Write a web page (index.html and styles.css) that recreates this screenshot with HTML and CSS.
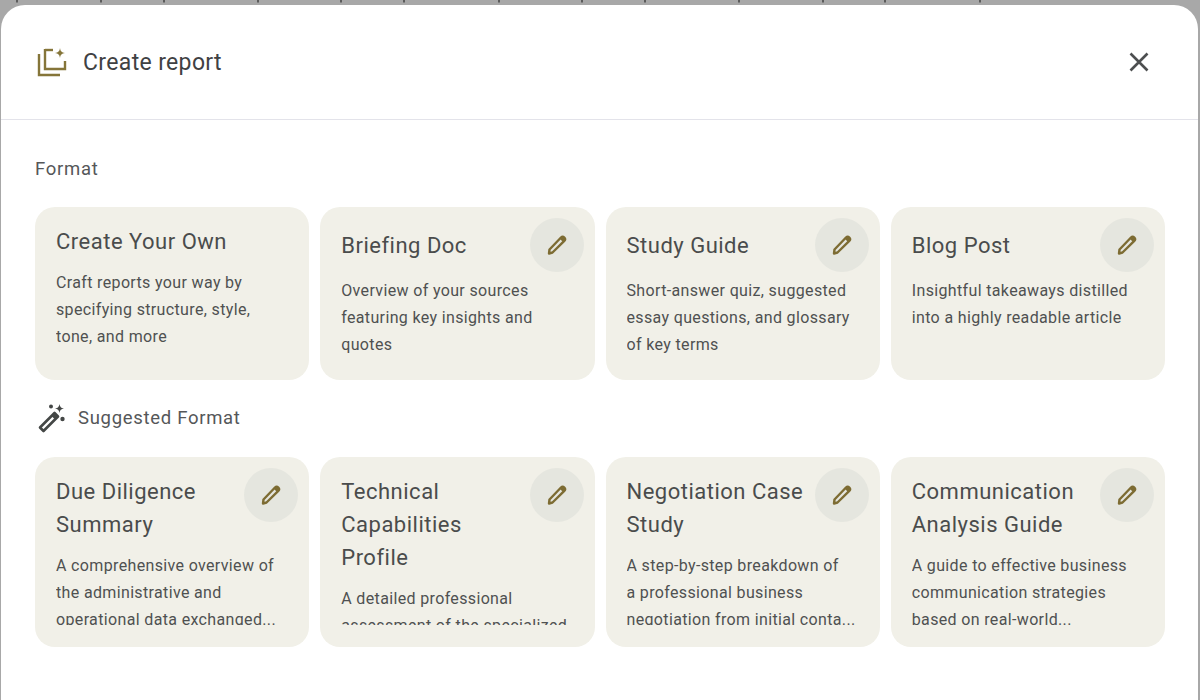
FILE: index.html
```html
<!DOCTYPE html>
<html lang="en">

<head>
    <meta charset="UTF-8">
    <title>Create report</title>
    <link rel="stylesheet" href="styles.css">
</head>

<body>
    <svg class="backdrop-marks" viewBox="0 0 1200 5" fill="#5c5c5c" aria-hidden="true">
        <rect x="16" width="2" height="2.500"/><rect x="100" width="2" height="2.500"/><rect x="163" width="2" height="2.500"/>
        <rect x="257" width="2" height="2.500"/><rect x="340" width="2" height="2.500"/><rect x="403" width="2" height="2.500"/>
        <rect x="498" width="2" height="2.500"/><rect x="581" width="2" height="2.500"/><rect x="644" width="2" height="2.500"/>
        <rect x="738" width="2" height="2.500"/><rect x="822" width="2" height="2.500"/><rect x="884" width="2" height="2.500"/>
        <rect x="979" width="2" height="2.500"/>
    </svg>
    <div class="modal">
        <header class="modal-header">
            <svg class="header-icon" viewBox="0 0 30 30" fill="none" stroke="#857539" stroke-width="2.400">
                <path d="M2 7v21h21"/>
                <path d="M8 2v20h20V14"/>
                <path d="M8 3h8"/>
                <path d="M23 1c.6 3.400 1.600 4.400 5 5-3.400.6-4.400 1.600-5 5-.6-3.400-1.600-4.400-5-5 3.400-.6 4.400-1.600 5-5z" fill="#857539" stroke="none"/>
            </svg>
            <h1>Create report</h1>
            <button class="close-btn" type="button" aria-label="Close">
                <svg viewBox="0 0 20 20" stroke="#4d4f50" stroke-width="2.600" fill="none">
                    <path d="M1.500 1.500l17 17M18.500 1.500l-17 17"/>
                </svg>
            </button>
        </header>

        <main class="modal-body">
            <h2 class="section-label">Format</h2>
            <div class="card-row">
                <div class="card">
                    <div class="card-head"><h3>Create Your Own</h3></div>
                    <p>Craft reports your way by specifying structure, style, tone, and more</p>
                </div>
                <div class="card editable">
                    <div class="card-head"><h3>Briefing Doc</h3></div>
                    <p>Overview of your sources featuring key insights and quotes</p>
                    <button class="edit-btn" type="button" aria-label="Edit"><svg viewBox="0 0 24 24"><use href="#pencil"/></svg></button>
                </div>
                <div class="card editable">
                    <div class="card-head"><h3>Study Guide</h3></div>
                    <p>Short-answer quiz, suggested essay questions, and glossary of key terms</p>
                    <button class="edit-btn" type="button" aria-label="Edit"><svg viewBox="0 0 24 24"><use href="#pencil"/></svg></button>
                </div>
                <div class="card editable">
                    <div class="card-head"><h3>Blog Post</h3></div>
                    <p>Insightful takeaways distilled into a highly readable article</p>
                    <button class="edit-btn" type="button" aria-label="Edit"><svg viewBox="0 0 24 24"><use href="#pencil"/></svg></button>
                </div>
            </div>

            <div class="suggested-label">
                <svg class="wand-icon" viewBox="0 0 30 30">
                    <path d="M3 24.500L17.500 10l3.500 3.500L6.500 28z" fill="none" stroke="#444746" stroke-width="2.600" stroke-linejoin="round"/>
                    <path d="M14.500 13l3.500 3.500L21 13.500 17.500 10z" fill="#444746"/>
                    <path d="M22.500 1c.6 3 1.500 4 4.500 4.500-3 .6-3.900 1.500-4.500 4.500-.6-3-1.500-3.900-4.500-4.500 3-.5 3.900-1.500 4.500-4.500z" fill="#444746"/>
                    <circle cx="14" cy="3.500" r="2" fill="#444746"/>
                    <circle cx="25.500" cy="16" r="2.200" fill="#444746"/>
                </svg>
                <h2 class="section-label">Suggested Format</h2>
            </div>
            <div class="card-row tall">
                <div class="card editable">
                    <div class="card-head"><h3>Due Diligence Summary</h3></div>
                    <p>A comprehensive overview of the administrative and operational data exchanged...</p>
                    <button class="edit-btn" type="button" aria-label="Edit"><svg viewBox="0 0 24 24"><use href="#pencil"/></svg></button>
                </div>
                <div class="card editable">
                    <div class="card-head"><h3>Technical Capabilities Profile</h3></div>
                    <p>A detailed professional assessment of the specialized</p>
                    <button class="edit-btn" type="button" aria-label="Edit"><svg viewBox="0 0 24 24"><use href="#pencil"/></svg></button>
                </div>
                <div class="card editable">
                    <div class="card-head"><h3>Negotiation Case Study</h3></div>
                    <p>A step-by-step breakdown of<br>a professional business<br>negotiation from initial conta...</p>
                    <button class="edit-btn" type="button" aria-label="Edit"><svg viewBox="0 0 24 24"><use href="#pencil"/></svg></button>
                </div>
                <div class="card editable">
                    <div class="card-head"><h3>Communication Analysis Guide</h3></div>
                    <p>A guide to effective business communication strategies based on real-world...</p>
                    <button class="edit-btn" type="button" aria-label="Edit"><svg viewBox="0 0 24 24"><use href="#pencil"/></svg></button>
                </div>
            </div>
        </main>
    </div>

    <svg class="icon-defs" aria-hidden="true">
        <symbol id="pencil" viewBox="0 0 24 24">
            <path d="M4.500 16.500L16 4.500c1-1 2.300-1 3.300 0s1 2.300 0 3.300L7.500 19.500 4 20.500z" fill="none" stroke="#7d6c33" stroke-width="2.400" stroke-linejoin="round"/>
            <path d="M15 6l1-1.500c1-1 2.300-1 3.300 0s1 2.300 0 3.300L18 9z" fill="#7d6c33"/>
        </symbol>
    </svg>
</body>

</html>
```

FILE: styles.css
```css
* {
    box-sizing: border-box;
}

html,
body {
    height: 100%;
}

body {
    margin: 0;
    overflow: hidden;
    background-color: #a8a8a8;
    color: #444746;
    font-family: Roboto, "Noto Sans", sans-serif;
}

.icon-defs {
    display: none;
}

.backdrop-marks {
    display: block;
    width: 1200px;
    height: 5px;
}

.modal {
    height: 720px;
    margin: 0 2px 0 1px;
    background-color: #ffffff;
    border-radius: 24px 24px 0 0;
}

.modal-header {
    display: flex;
    align-items: center;
    height: 115px;
    padding: 0 49px 0 36px;
    border-bottom: 1px solid #e3e3ea;
}

.header-icon {
    width: 30px;
    height: 30px;
    margin-right: 16px;
}

.modal-header h1 {
    flex: 1;
    margin: 0;
    color: #3f4143;
    font-size: 23px;
    font-weight: 400;
    letter-spacing: 0.35px;
}

.close-btn {
    width: 20px;
    height: 20px;
    padding: 0;
    border: none;
    background: none;
}

.close-btn svg {
    display: block;
}

.modal-body {
    padding: 36px 33px 0 34px;
}

.section-label {
    margin: 0;
    color: #555759;
    font-size: 18.500px;
    font-weight: 400;
    line-height: 26px;
    letter-spacing: 0.7px;
}

.card-row {
    display: grid;
    grid-template-columns: repeat(4, 1fr);
    gap: 11px;
    margin-top: 25px;
}

.card-row.tall {
    grid-template-rows: 190px;
    margin-top: 24px;
}

.card {
    position: relative;
    display: flex;
    flex-direction: column;
    padding: 18px 21px 22px;
    border-radius: 20px;
    background-color: #f1f0e8;
}

.card-head {
    display: flex;
    align-items: center;
    flex-shrink: 0;
    margin-bottom: 11px;
}

.editable .card-head {
    min-height: 41px;
    padding-right: 50px;
}

.card h3 {
    margin: 0;
    color: #4a4c4c;
    font-size: 22px;
    font-weight: 400;
    line-height: 33px;
    letter-spacing: 0.5px;
}

.card p {
    display: -webkit-box;
    margin: 0;
    min-height: 0;
    overflow: hidden;
    color: #4f5151;
    font-size: 16px;
    line-height: 27px;
    letter-spacing: 0.35px;
    -webkit-box-orient: vertical;
    -webkit-line-clamp: 3;
}

.edit-btn {
    position: absolute;
    top: 11px;
    right: 11px;
    display: flex;
    align-items: center;
    justify-content: center;
    width: 54px;
    height: 54px;
    padding: 0;
    border: none;
    border-radius: 50%;
    background-color: #e5e6df;
}

.edit-btn svg {
    width: 24px;
    height: 24px;
}

.suggested-label {
    display: flex;
    align-items: center;
    gap: 11px;
    margin: 23px 0 0 2px;
}

.wand-icon {
    width: 30px;
    height: 30px;
}
```
